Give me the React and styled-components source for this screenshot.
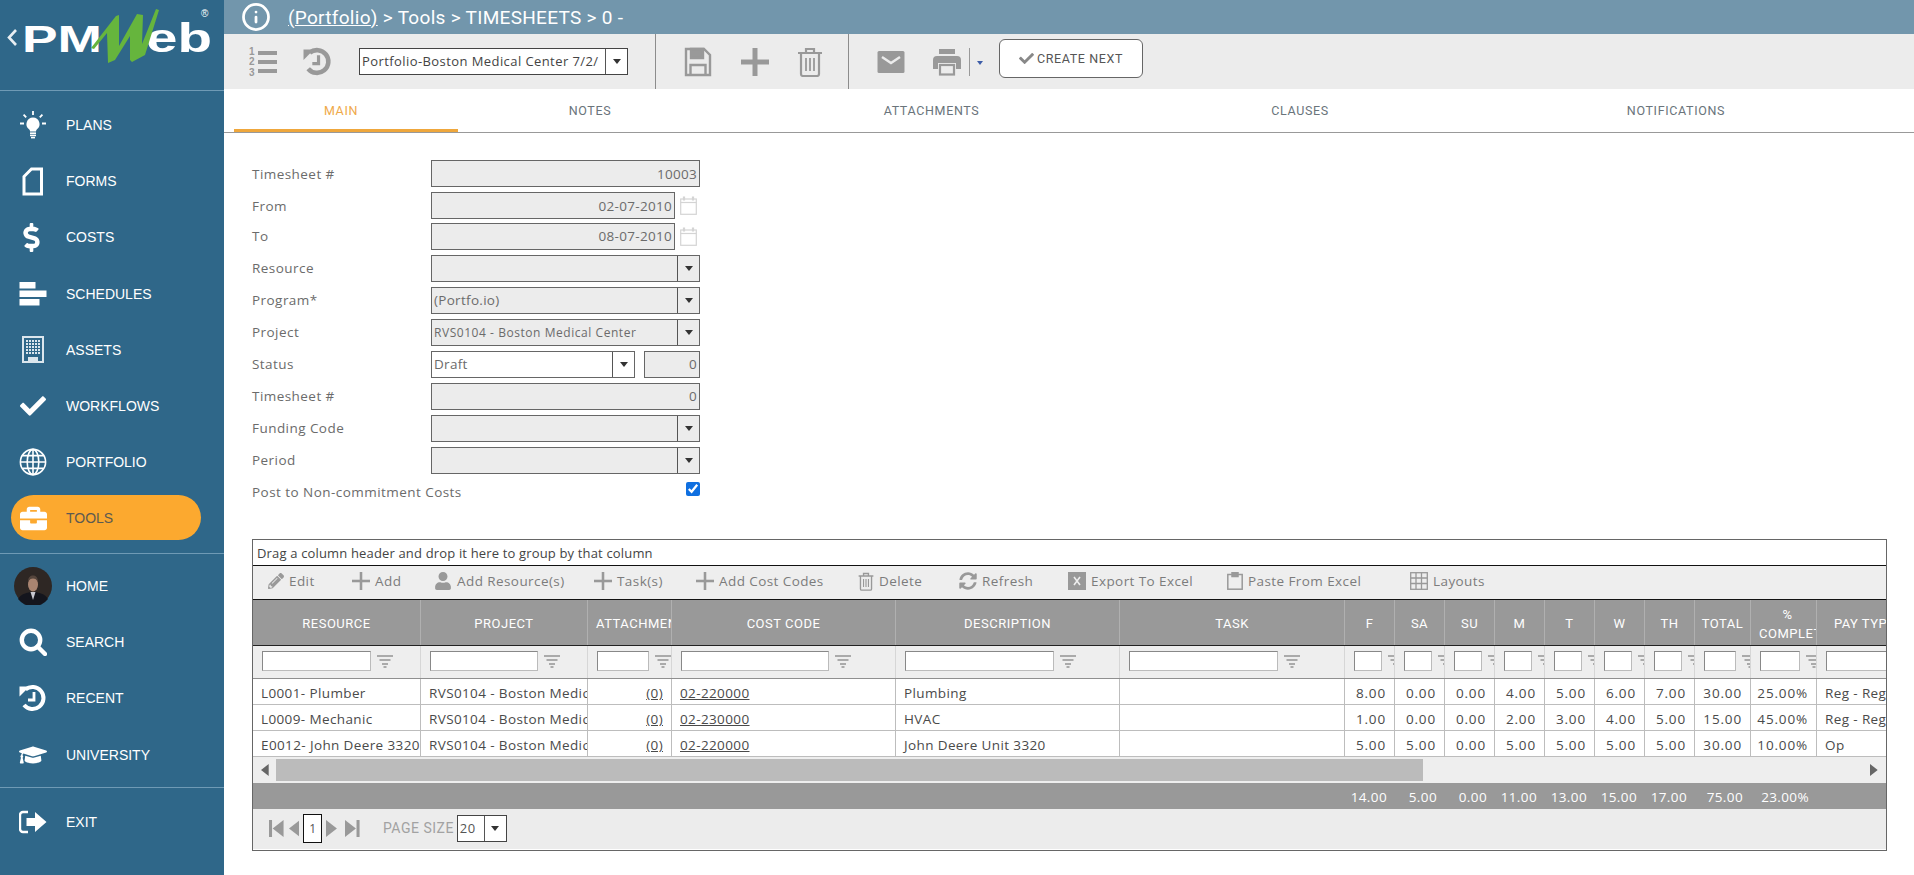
import React from "react";
import styled, { createGlobalStyle } from "styled-components";
import { Info } from "lucide-react";
import {
  FaBriefcase,
  FaCheck,
  FaDollarSign,
  FaGraduationCap,
  FaPencilAlt,
  FaSyncAlt,
  FaUser,
} from "react-icons/fa";

const GlobalStyle = createGlobalStyle`
  html, body {
    margin: 0;
    padding: 0;
    height: 100%;
    overflow: hidden;
    background: #fff;
  }
  * {
    box-sizing: border-box;
  }
`;

const Page = styled.div`
  display: flex;
  width: 1914px;
  height: 875px;
  font-family: "Open Sans", "Liberation Sans", sans-serif;
  color: #666;
`;

/* sidebar */
const Sidebar = styled.aside`
  width: 224px;
  flex-shrink: 0;
  background: #2f6789;
  color: #fff;
  font-family: "Liberation Sans", Arial, sans-serif;
`;

const LogoBlock = styled.div`
  height: 91px;
  border-bottom: 1px solid #6f9ab5;
`;

const NavSection = styled.nav`
  padding-top: ${(p) => p.$top}px;
  padding-bottom: ${(p) => p.$bottom}px;
  border-bottom: ${(p) => (p.$line ? "1px solid #6f9ab5" : "none")};
`;

const NavItem = styled.div`
  display: flex;
  align-items: center;
  height: 56.2px;
  font-size: 14px;
  position: relative;
  z-index: 0;
  color: ${(p) => (p.$active ? "#5c5a50" : "#fff")};
  &::before {
    content: ${(p) => (p.$active ? '""' : "none")};
    position: absolute;
    z-index: -1;
    left: 11px;
    width: 190px;
    top: 5px;
    height: 45px;
    border-radius: 23px;
    background: #fca92f;
  }
`;

const NavIcon = styled.span`
  width: 66px;
  display: flex;
  justify-content: center;
  color: #fff;
`;

const DollarIcon = styled(FaDollarSign)`
  margin-right: 4px;
`;

/* right column */
const Main = styled.main`
  flex: 1;
  min-width: 0;
  display: flex;
  flex-direction: column;
`;

const TopBar = styled.header`
  height: 34px;
  background: #7296ac;
  color: #fff;
  display: flex;
  align-items: center;
  padding-left: 17px;
  font-family: Roboto, sans-serif;
  font-size: 19px;
  gap: 17px;
  a {
    color: #fff;
    text-decoration: underline;
  }
`;

const Crumbs = styled.div`
  letter-spacing: 0.3px;
`;

const ToolBar = styled.div`
  height: 55px;
  background: #ececec;
  display: flex;
`;

const ToolGroup = styled.div`
  display: flex;
  align-items: center;
  width: ${(p) => p.$width}px;
  padding-left: ${(p) => p.$pad}px;
  border-right: ${(p) => (p.$line ? "1px solid #8c8c8c" : "none")};
  color: #999;
`;

const Spacer = styled.span`
  width: ${(p) => p.$w}px;
  flex-shrink: 0;
`;

const TopSelect = styled.div`
  width: 269px;
  height: 27px;
  border: 1px solid #444;
  background: #fff;
  display: flex;
  margin-top: -1px;
  font-size: 13px;
  color: #444;
  letter-spacing: 0.42px;
  span {
    flex: 1;
    padding-left: 2px;
    line-height: 25px;
    white-space: nowrap;
    overflow: hidden;
  }
`;

const CaretBox = styled.i`
  width: 22px;
  flex-shrink: 0;
  align-self: stretch;
  display: flex;
  align-items: center;
  justify-content: center;
  border-left: 1px solid #555;
  &::after {
    content: "";
    border: 4px solid transparent;
    border-top: 5px solid #333;
    border-bottom: 0;
  }
`;

const CreateNext = styled.button`
  height: 39px;
  width: 144px;
  margin-left: 16px;
  margin-top: -7px;
  background: #fff;
  border: 1px solid #666;
  border-radius: 6px;
  display: flex;
  align-items: center;
  justify-content: center;
  gap: 3px;
  padding: 0;
  color: #555;
  font-family: Roboto, sans-serif;
  font-size: 12.5px;
  letter-spacing: 0.6px;
  svg {
    color: #888;
  }
`;

const Tabs = styled.div`
  height: 44px;
  flex-shrink: 0;
  border-bottom: 1px solid #999;
  display: grid;
  grid-template-columns: 10px 224px 264px 419px 318px 434px;
  font-family: Roboto, sans-serif;
  font-size: 12.5px;
  letter-spacing: 0.65px;
  color: #6a747b;
`;

const Tab = styled.div`
  display: flex;
  align-items: center;
  justify-content: center;
  height: 43px;
  padding-right: ${(p) => (p.$active ? 10 : 0)}px;
  color: ${(p) => (p.$active ? "#efa94a" : "inherit")};
  border-bottom: ${(p) => (p.$active ? "3px solid #efa73c" : "none")};
  padding-top: ${(p) => (p.$active ? 3 : 0)}px;
`;

/* form */
const Content = styled.div`
  padding: 27px 0 0 28px;
`;

const Form = styled.div`
  display: flex;
  flex-direction: column;
  gap: 5px;
  width: 476px;
`;

const FormRow = styled.div`
  display: flex;
  align-items: center;
  height: 27px;
  margin-top: ${(p) => (p.$tight ? -1.5 : 0)}px;
`;

const Label = styled.label`
  width: ${(p) => p.$width || 179}px;
  font-size: 13.5px;
  letter-spacing: 0.45px;
  color: #6b6b6b;
  white-space: nowrap;
  flex-shrink: 0;
`;

const Field = styled.div`
  height: 27px;
  width: ${(p) => p.$width}px;
  flex-shrink: 0;
  margin-left: ${(p) => p.$left || 0}px;
  border: 1px solid #666;
  background: ${(p) => (p.$white ? "#fff" : "#ececec")};
  display: flex;
  align-items: center;
  font-size: 13.5px;
  letter-spacing: 0.3px;
  color: #6b6b6b;
`;

const FieldValue = styled.span`
  flex: 1;
  padding: 0 2px;
  text-align: ${(p) => (p.$right ? "right" : "left")};
  font-size: ${(p) => p.$size || 13.5}px;
  letter-spacing: ${(p) => (p.$size ? 0.55 : 0.3)}px;
  white-space: nowrap;
  overflow: hidden;
`;

const CalendarSlot = styled.span`
  margin-left: 5px;
  display: flex;
  color: #d4d4d4;
`;

const Check = styled.input`
  margin: -6px 0 0 234px;
  width: 14px;
  height: 14px;
  accent-color: #0f6fe0;
`;

/* grid */
const Grid = styled.section`
  margin-top: 33px;
  width: 1635px;
  height: 312px;
  border: 1px solid #666;
  overflow: hidden;
  font-size: 13.5px;
  letter-spacing: 0.38px;
`;

const GroupPanel = styled.div`
  height: 26px;
  padding-left: 4px;
  line-height: 26px;
  font-size: 13px;
  color: #444;
  letter-spacing: 0.16px;
  border-bottom: 1px solid #111;
  background: #fff;
`;

const GridTools = styled.div`
  height: 34px;
  border-bottom: 1px solid #111;
  background: #eee;
  padding-left: 15px;
  padding-bottom: 2px;
  display: grid;
  grid-template-columns: 84px 82px 160px 102px 162px 101px 109px 159px 183px auto;
  align-items: center;
  color: #7c7c7c;
`;

const GridTool = styled.span`
  display: flex;
  align-items: center;
  gap: 5px;
  white-space: nowrap;
  letter-spacing: 0.42px;
  svg {
    color: #999;
    flex-shrink: 0;
  }
`;

const columns =
  "168px 167px 84px 224px 224px 225px 50px 50px 50px 50px 50px 50px 50px 56px 66px 96px";

const HeadRow = styled.div`
  display: grid;
  grid-template-columns: ${columns};
  height: 46px;
  background: #999;
  border-bottom: 1px solid #222;
  font-family: Roboto, sans-serif;
  font-size: 13px;
  letter-spacing: 0.5px;
  color: #fff;
`;

const HeadCell = styled.div`
  display: flex;
  flex-direction: column;
  align-items: ${(p) => (p.$clip ? "flex-start" : "center")};
  justify-content: center;
  padding-left: ${(p) => (p.$clip ? 8 : 0)}px;
  padding-top: 3px;
  line-height: 19px;
  overflow: hidden;
  white-space: nowrap;
  border-right: 1px solid #b0b0b0;
  b {
    font-weight: 400;
    align-self: center;
  }
`;

const FilterRow = styled.div`
  display: grid;
  grid-template-columns: ${columns};
  height: 33px;
  background: #eee;
  border-bottom: 1px solid #8f8f8f;
`;

const FilterCell = styled.div`
  display: flex;
  align-items: center;
  gap: 6px;
  padding-left: 9px;
  padding-bottom: 1px;
  border-right: 1px solid #d6d6d6;
  overflow: hidden;
  svg {
    flex-shrink: 0;
    color: #aaa;
  }
`;

const FilterInput = styled.div`
  height: 20px;
  flex-shrink: 0;
  width: ${(p) => p.$width}px;
  background: #fff;
  border: 1px solid #9a9a9a;
  border-color: #888 #bbb #bbb #888;
`;

const DataRow = styled.div`
  display: grid;
  grid-template-columns: ${columns};
  height: 26px;
  border-bottom: 1px solid #bdbdbd;
  background: #fff;
  color: #4a4a4a;
`;

const DataCell = styled.div`
  padding: 1px ${(p) => (p.$right ? 8 : 0)}px 0 ${(p) => (p.$right ? 0 : 8)}px;
  text-align: ${(p) => (p.$right ? "right" : "left")};
  letter-spacing: ${(p) => (p.$num ? 0.85 : 0.38)}px;
  line-height: 26px;
  white-space: nowrap;
  overflow: hidden;
  border-right: 1px solid #bdbdbd;
  a {
    color: #4a4a4a;
    text-decoration: underline;
  }
`;

const ScrollBar = styled.div`
  height: 26px;
  background: #eee;
  display: flex;
  align-items: center;
  padding: 0 8px;
  color: #666;
`;

const ScrollThumb = styled.div`
  height: 22px;
  width: 1147px;
  margin-left: 7px;
  margin-right: auto;
  background: #bbb;
`;

const FooterRow = styled.div`
  display: grid;
  grid-template-columns: ${columns};
  height: 26px;
  background: #999;
  color: #fff;
  line-height: 28px;
`;

const FooterCell = styled.div`
  text-align: right;
  padding-right: 8px;
`;

const Pager = styled.div`
  height: 40px;
  background: #ececec;
  display: flex;
  align-items: center;
  padding-left: 16px;
  color: #999;
`;

const PageBox = styled.div`
  width: 19px;
  height: 29px;
  margin: 0 4px;
  border: 1px solid #111;
  background: #fff;
  color: #555;
  font-size: 12px;
  display: flex;
  align-items: center;
  justify-content: center;
`;

const PageSize = styled.span`
  margin: -2px 3px 0 23px;
  font-family: Roboto, sans-serif;
  font-size: 14px;
  letter-spacing: 0.5px;
  color: #a2a2a2;
`;

const PageSelect = styled.div`
  width: 50px;
  height: 27px;
  margin-top: -1px;
  background: #fff;
  border: 1px solid #444;
  display: flex;
  font-size: 13px;
  color: #555;
  span {
    flex: 1;
    padding: 3px 0 0 2px;
  }
`;

/* drawings */
const Bulb = () => (
  <svg width="28" height="28" viewBox="0 0 28 28" fill="currentColor">
    <path d="M14 6.5a6.6 6.6 0 0 0-4 11.8c.8.7 1 1.4 1 2.2h6c0-.8.3-1.5 1-2.2a6.6 6.6 0 0 0-4-11.8z" />
    <rect x="11" y="21.4" width="6" height="1.6" />
    <rect x="11" y="23.6" width="6" height="1.6" />
    <rect x="12" y="25.8" width="4" height="1.6" />
    <path d="M14 0v4M4.6 3.6l2.6 2.8M23.4 3.6l-2.6 2.8M1 12.5h4M23 12.5h4" stroke="currentColor" strokeWidth="1.8" />
  </svg>
);

const FormIcon = () => (
  <svg width="22" height="29" viewBox="0 0 22 29" fill="none" stroke="currentColor" strokeWidth="3">
    <path d="M19.500 2H9.500L2 9.500V27h17.500z" />
  </svg>
);

const ScheduleIcon = () => (
  <svg width="28" height="24" viewBox="0 0 28 24" fill="currentColor">
    <rect x="0.5" y="0" width="16" height="6.5" />
    <rect x="0.5" y="8.5" width="27" height="6.5" />
    <rect x="0.5" y="17" width="20" height="6.5" />
  </svg>
);

const BuildingIcon = () => (
  <svg width="22" height="27" viewBox="0 0 22 27">
    <rect x="1" y="1" width="20" height="25" fill="none" stroke="#dbe6ed" strokeWidth="2" />
    {[4, 7, 10, 13, 16].map((y) =>
      [5, 8, 11, 14, 17].map((x) => (
        <rect key={`${x}-${y}`} x={x - 1} y={y} width="2" height="2" fill="#dbe6ed" />
      ))
    )}
    <path d="M6 26v-5h10v5" fill="#dbe6ed" />
  </svg>
);

const GlobeIcon = () => (
  <svg width="28" height="28" viewBox="0 0 28 28" fill="none" stroke="currentColor" strokeWidth="1.6">
    <circle cx="14" cy="14" r="12.6" />
    <ellipse cx="14" cy="14" rx="5.8" ry="12.6" />
    <path d="M14 1.4v25.2M1.4 14h25.2M3.3 7.6h21.4M3.3 20.4h21.4" />
  </svg>
);

const Avatar = () => (
  <svg width="38" height="38" viewBox="0 0 38 38">
    <circle cx="19" cy="19" r="19" fill="#2e2724" />
    <path d="M4 32c3-5 9-7 15-7s12 2 15 7a19 19 0 0 1-30 0z" fill="#14151d" />
    <path d="M16.500 25l2.500 8 2.500-8z" fill="#c9c9d2" />
    <ellipse cx="19" cy="17.500" rx="5" ry="7" fill="#a98470" />
    <path d="M14 15c0-5 2.500-6.500 5-6.500s5 1.500 5 6.500c-1-2.500-3-3.500-5-3.500s-4 1-5 3.500z" fill="#55453c" />
  </svg>
);

const SearchIcon = () => (
  <svg width="28" height="28" viewBox="0 0 28 28" fill="none" stroke="currentColor">
    <circle cx="12" cy="12" r="9.2" strokeWidth="4.4" />
    <path d="M18.500 18.500L26 26" strokeWidth="4.4" strokeLinecap="round" />
  </svg>
);

const HistoryIcon = ({ size = 28, weight = 4 }) => (
  <svg width={size} height={size} viewBox="0 0 28 28" fill="none" stroke="currentColor">
    <path d="M6.500 5.500A11 11 0 1 1 5 21" strokeWidth={weight} />
    <path d="M0.500 2.500L10.500 2.500 0.500 12.500z" fill="currentColor" stroke="none" />
    <path d="M15 8v8H9" strokeWidth={weight * 0.7} />
  </svg>
);

const CapIcon = () => <FaGraduationCap size={28} />;

const ExitIcon = () => (
  <svg width="28" height="24" viewBox="0 0 28 24" fill="currentColor">
    <path d="M9 2H4a3 3 0 0 0-3 3v14a3 3 0 0 0 3 3h5" fill="none" stroke="currentColor" strokeWidth="2.4" />
    <path d="M7.500 8H16V2l11.500 10L16 22v-6H7.500z" />
  </svg>
);

const Logo = () => (
  <svg width="224" height="90" viewBox="0 0 224 90">
    <path d="M16 30l-7 7.500 7 7.500" fill="none" stroke="#e8eef2" strokeWidth="2.6" />
    <g fill="#fff" fontFamily="'Liberation Sans', Arial, sans-serif" fontWeight="700">
      <text x="22" y="52" fontSize="37" textLength="80" lengthAdjust="spacingAndGlyphs">PM</text>
      <text x="146" y="52" fontSize="41" textLength="66" lengthAdjust="spacingAndGlyphs">eb</text>
      <text x="201" y="17" fontSize="10" fontWeight="400">®</text>
    </g>
    <path
      d="M91 48L116 16 119 15 119 46 137 14 143 15 142 44 156 9 159 10 145 55 132 62 130 60 130 36 115 60 108 63 107 33 94 49z"
      fill="#66b53d"
    />
  </svg>
);

const ListIcon = () => (
  <svg width="30" height="32" viewBox="0 0 30 32" fill="currentColor">
    <text x="0" y="9" fontSize="10" fontFamily="'Liberation Sans', sans-serif" fontWeight="700">1</text>
    <text x="0" y="19" fontSize="10" fontFamily="'Liberation Sans', sans-serif" fontWeight="700">2</text>
    <text x="0" y="30" fontSize="10" fontFamily="'Liberation Sans', sans-serif" fontWeight="700">3</text>
    <rect x="9" y="5" width="19" height="4" />
    <rect x="9" y="14" width="19" height="4" />
    <rect x="9" y="23" width="19" height="4" />
  </svg>
);

const SaveIcon = () => (
  <svg width="28" height="30" viewBox="0 0 28 30" fill="none" stroke="currentColor" strokeWidth="2.4">
    <path d="M2 2h18l6 6v20H2z" />
    <path d="M7 2v9h12V2z" fill="currentColor" />
    <path d="M6.500 28V18h15v10" />
  </svg>
);

const PlusIcon = ({ size = 28, weight = 5 }) => (
  <svg width={size} height={size} viewBox="0 0 28 28" fill="currentColor">
    <rect x={14 - weight / 2} y="0" width={weight} height="28" />
    <rect x="0" y={14 - weight / 2} width="28" height={weight} />
  </svg>
);

const TrashIcon = ({ width = 26, height = 30 }) => (
  <svg width={width} height={height} viewBox="0 0 26 30" fill="none" stroke="currentColor" strokeWidth="2.2">
    <path d="M1 6h24M9 6V2h8v4M4 6v21a2 2 0 0 0 2 2h14a2 2 0 0 0 2-2V6" />
    <path d="M9 11v13M13 11v13M17 11v13" strokeWidth="1.8" />
  </svg>
);

const MailIcon = () => (
  <svg width="28" height="24" viewBox="0 0 28 24">
    <rect x="0.500" y="1" width="27" height="22" rx="1.500" fill="currentColor" />
    <path d="M5 7l9 6 9-6" fill="none" stroke="#ececec" strokeWidth="2.400" />
  </svg>
);

const PrintIcon = () => (
  <svg width="28" height="28" viewBox="0 0 28 28" fill="currentColor">
    <rect x="6" y="1" width="16" height="5" />
    <path d="M4 8h20a4 4 0 0 1 4 4v9h-5v-6H5v6H0v-9a4 4 0 0 1 4-4z" />
    <rect x="7" y="17" width="14" height="9.500" fill="none" stroke="currentColor" strokeWidth="2.200" />
  </svg>
);

const PrintCaret = styled.span`
  margin-left: 8px;
  height: 28px;
  padding-left: 7px;
  border-left: 1px solid #999;
  display: flex;
  align-items: center;
  &::after {
    content: "";
    margin-top: 3px;
    border: 3.500px solid transparent;
    border-top: 4px solid #3d5da8;
    border-bottom: 0;
  }
`;

const Calendar = () => (
  <svg width="17" height="19" viewBox="0 0 17 19" fill="none" stroke="currentColor" strokeWidth="1.200">
    <rect x="0.700" y="3" width="15.600" height="15.300" />
    <path d="M0.700 6.500h15.600" />
    <path d="M4 0.500v4M13 0.500v4" strokeWidth="2.200" />
  </svg>
);

const FilterIcon = () => (
  <svg width="16" height="14" viewBox="0 0 16 14" fill="currentColor">
    <rect x="0" y="1" width="16" height="2" />
    <rect x="2.500" y="5" width="11" height="2" />
    <rect x="5" y="9" width="6" height="2" />
    <rect x="6.500" y="12" width="3" height="2" />
  </svg>
);

const ExcelIcon = () => (
  <svg width="18" height="18" viewBox="0 0 18 18">
    <rect width="18" height="18" fill="#999" />
    <path d="M6 5l6 8M12 5l-6 8" stroke="#eee" strokeWidth="1.600" />
  </svg>
);

const ClipIcon = () => (
  <svg width="16" height="18" viewBox="0 0 16 18" fill="none" stroke="currentColor" strokeWidth="1.500">
    <rect x="0.800" y="2.500" width="14.400" height="14.700" />
    <rect x="5" y="0.500" width="6" height="4" fill="currentColor" />
  </svg>
);

const TableIcon = () => (
  <svg width="18" height="18" viewBox="0 0 18 18" fill="none" stroke="currentColor" strokeWidth="1.300">
    <rect x="0.700" y="0.700" width="16.600" height="16.600" />
    <path d="M0.700 6h16.600M0.700 11.500h16.600M6 0.700v16.600M11.500 0.700v16.600" />
  </svg>
);

const Arrow = ({ dir, stop, h = 14 }) => (
  <svg width={((stop ? 12 : 9) * h) / 14} height={h} viewBox={stop ? "0 0 12 14" : "0 0 9 14"} fill="currentColor">
    {dir === "left" ? (
      stop ? (
        <>
          <rect x="0" y="0" width="2.500" height="14" />
          <path d="M12 0v14L3 7z" />
        </>
      ) : (
        <path d="M9 0v14L0 7z" />
      )
    ) : stop ? (
      <>
        <rect x="9.500" y="0" width="2.500" height="14" />
        <path d="M0 0v14l9-7z" />
      </>
    ) : (
      <path d="M0 0v14l9-7z" />
    )}
  </svg>
);

const ArrowGap = styled.span`
  display: flex;
  margin-left: ${(p) => p.$left || 0}px;
`;

const primaryNav = [
  ["PLANS", <Bulb />],
  ["FORMS", <FormIcon />],
  ["COSTS", <DollarIcon size={29} />],
  ["SCHEDULES", <ScheduleIcon />],
  ["ASSETS", <BuildingIcon />],
  ["WORKFLOWS", <FaCheck size={26} />],
  ["PORTFOLIO", <GlobeIcon />],
  ["TOOLS", <FaBriefcase size={27} />, true],
];

const secondaryNav = [
  ["HOME", <Avatar />],
  ["SEARCH", <SearchIcon />],
  ["RECENT", <HistoryIcon />],
  ["UNIVERSITY", <CapIcon />],
];

const tabs = ["MAIN", "NOTES", "ATTACHMENTS", "CLAUSES", "NOTIFICATIONS"];

const headers = [
  ["RESOURCE", 109],
  ["PROJECT", 108],
  ["ATTACHMENT", 52, true],
  ["COST CODE", 148],
  ["DESCRIPTION", 149],
  ["TASK", 149],
  ["F", 28],
  ["SA", 28],
  ["SU", 28],
  ["M", 28],
  ["T", 28],
  ["W", 28],
  ["TH", 28],
  ["TOTAL", 32],
  ["COMPLETE", 40, true],
  ["PAY TYPE", 90],
];

const rows = [
  ["L0001- Plumber", "02-220000", "Plumbing", "8.00", "0.00", "0.00", "4.00", "5.00", "6.00", "7.00", "30.00", "25.00%", "Reg - Regular"],
  ["L0009- Mechanic", "02-230000", "HVAC", "1.00", "0.00", "0.00", "2.00", "3.00", "4.00", "5.00", "15.00", "45.00%", "Reg - Regular"],
  ["E0012- John Deere 3320", "02-220000", "John Deere Unit 3320", "5.00", "5.00", "0.00", "5.00", "5.00", "5.00", "5.00", "30.00", "10.00%", "Op"],
];

const totals = ["14.00", "5.00", "0.00", "11.00", "13.00", "15.00", "17.00", "75.00", "23.00%"];

const Select = ({ value, size }) => (
  <Field $width={269}>
    <FieldValue $size={size}>{value}</FieldValue>
    <CaretBox />
  </Field>
);

function App() {
  return (
    <Page>
      <GlobalStyle />
      <Sidebar>
        <LogoBlock>
          <Logo />
        </LogoBlock>
        <NavSection $top={6} $bottom={6.500} $line>
          {primaryNav.map(([name, icon, active]) => (
            <NavItem key={name} $active={active}>
              <NavIcon>{icon}</NavIcon>
              {name}
            </NavItem>
          ))}
        </NavSection>
        <NavSection $top={4} $bottom={4} $line>
          {secondaryNav.map(([name, icon]) => (
            <NavItem key={name}>
              <NavIcon>{icon}</NavIcon>
              {name}
            </NavItem>
          ))}
        </NavSection>
        <NavSection $top={6}>
          <NavItem>
            <NavIcon>
              <ExitIcon />
            </NavIcon>
            EXIT
          </NavItem>
        </NavSection>
      </Sidebar>

      <Main>
        <TopBar>
          <Info size={30} strokeWidth={2.2} />
          <Crumbs>
            <a>(Portfolio)</a> &gt; Tools &gt; TIMESHEETS &gt; 0 -
          </Crumbs>
        </TopBar>

        <ToolBar>
          <ToolGroup $width={432} $pad={25} $line>
            <ListIcon />
            <Spacer $w={24} />
            <HistoryIcon size={29} weight={4.4} />
            <Spacer $w={27} />
            <TopSelect>
              <span>Portfolio-Boston Medical Center 7/2/</span>
              <CaretBox />
            </TopSelect>
          </ToolGroup>
          <ToolGroup $width={193} $pad={28} $line>
            <SaveIcon />
            <Spacer $w={29} />
            <PlusIcon />
            <Spacer $w={28} />
            <TrashIcon />
          </ToolGroup>
          <ToolGroup $pad={28}>
            <MailIcon />
            <Spacer $w={28} />
            <PrintIcon />
            <PrintCaret />
            <CreateNext>
              <FaCheck size={15} />
              CREATE NEXT
            </CreateNext>
          </ToolGroup>
        </ToolBar>

        <Tabs>
          <span />
          {tabs.map((tab, i) => (
            <Tab key={tab} $active={i === 0}>
              {tab}
            </Tab>
          ))}
        </Tabs>

        <Content>
          <Form>
            <FormRow>
              <Label>Timesheet #</Label>
              <Field $width={269}>
                <FieldValue $right>10003</FieldValue>
              </Field>
            </FormRow>
            <FormRow>
              <Label>From</Label>
              <Field $width={244}>
                <FieldValue $right>02-07-2010</FieldValue>
              </Field>
              <CalendarSlot>
                <Calendar />
              </CalendarSlot>
            </FormRow>
            <FormRow $tight>
              <Label>To</Label>
              <Field $width={244}>
                <FieldValue $right>08-07-2010</FieldValue>
              </Field>
              <CalendarSlot>
                <Calendar />
              </CalendarSlot>
            </FormRow>
            <FormRow>
              <Label>Resource</Label>
              <Select />
            </FormRow>
            <FormRow>
              <Label>Program*</Label>
              <Select value="(Portfo.io)" />
            </FormRow>
            <FormRow>
              <Label>Project</Label>
              <Select value="RVS0104 - Boston Medical Center" size={12} />
            </FormRow>
            <FormRow>
              <Label>Status</Label>
              <Field $width={204} $white>
                <FieldValue>Draft</FieldValue>
                <CaretBox />
              </Field>
              <Field $width={56} $left={9}>
                <FieldValue $right>0</FieldValue>
              </Field>
            </FormRow>
            <FormRow>
              <Label>Timesheet #</Label>
              <Field $width={269}>
                <FieldValue $right>0</FieldValue>
              </Field>
            </FormRow>
            <FormRow>
              <Label>Funding Code</Label>
              <Select />
            </FormRow>
            <FormRow>
              <Label>Period</Label>
              <Select />
            </FormRow>
            <FormRow>
              <Label $width={200}>Post to Non-commitment Costs</Label>
              <Check type="checkbox" defaultChecked readOnly />
            </FormRow>
          </Form>

          <Grid>
            <GroupPanel>Drag a column header and drop it here to group by that column</GroupPanel>
            <GridTools>
              <GridTool>
                <FaPencilAlt size={16} /> Edit
              </GridTool>
              <GridTool>
                <PlusIcon size={18} weight={4} /> Add
              </GridTool>
              <GridTool>
                <FaUser size={18} /> Add Resource(s)
              </GridTool>
              <GridTool>
                <PlusIcon size={18} weight={4} /> Task(s)
              </GridTool>
              <GridTool>
                <PlusIcon size={18} weight={4} /> Add Cost Codes
              </GridTool>
              <GridTool>
                <TrashIcon width={16} height={19} /> Delete
              </GridTool>
              <GridTool>
                <FaSyncAlt size={18} /> Refresh
              </GridTool>
              <GridTool>
                <ExcelIcon /> Export To Excel
              </GridTool>
              <GridTool>
                <ClipIcon /> Paste From Excel
              </GridTool>
              <GridTool>
                <TableIcon /> Layouts
              </GridTool>
            </GridTools>

            <HeadRow>
              {headers.map(([name, , clip]) => (
                <HeadCell key={name} $clip={clip}>
                  {name === "COMPLETE" && <b>%</b>}
                  {name}
                </HeadCell>
              ))}
            </HeadRow>

            <FilterRow>
              {headers.map(([name, width]) => (
                <FilterCell key={name}>
                  <FilterInput $width={width} />
                  <FilterIcon />
                </FilterCell>
              ))}
            </FilterRow>

            {rows.map((row) => (
              <DataRow key={row[0]}>
                <DataCell>{row[0]}</DataCell>
                <DataCell>RVS0104 - Boston Medical Center</DataCell>
                <DataCell $right>
                  <a>(0)</a>
                </DataCell>
                <DataCell>
                  <a>{row[1]}</a>
                </DataCell>
                <DataCell>{row[2]}</DataCell>
                <DataCell />
                {row.slice(3, 12).map((value, i) => (
                  <DataCell key={i} $right $num>
                    {value}
                  </DataCell>
                ))}
                <DataCell>{row[12]}</DataCell>
              </DataRow>
            ))}

            <ScrollBar>
              <Arrow dir="left" h={12} />
              <ScrollThumb />
              <Arrow dir="right" h={12} />
            </ScrollBar>

            <FooterRow>
              <span />
              <span />
              <span />
              <span />
              <span />
              <span />
              {totals.map((value, i) => (
                <FooterCell key={i}>{value}</FooterCell>
              ))}
            </FooterRow>

            <Pager>
              <Arrow dir="left" stop h={17} />
              <ArrowGap $left={5}>
                <Arrow dir="left" h={17} />
              </ArrowGap>
              <PageBox>1</PageBox>
              <Arrow dir="right" h={17} />
              <ArrowGap $left={8}>
                <Arrow dir="right" stop h={17} />
              </ArrowGap>
              <PageSize>PAGE SIZE</PageSize>
              <PageSelect>
                <span>20</span>
                <CaretBox />
              </PageSelect>
            </Pager>
          </Grid>
        </Content>
      </Main>
    </Page>
  );
}

export default App;
